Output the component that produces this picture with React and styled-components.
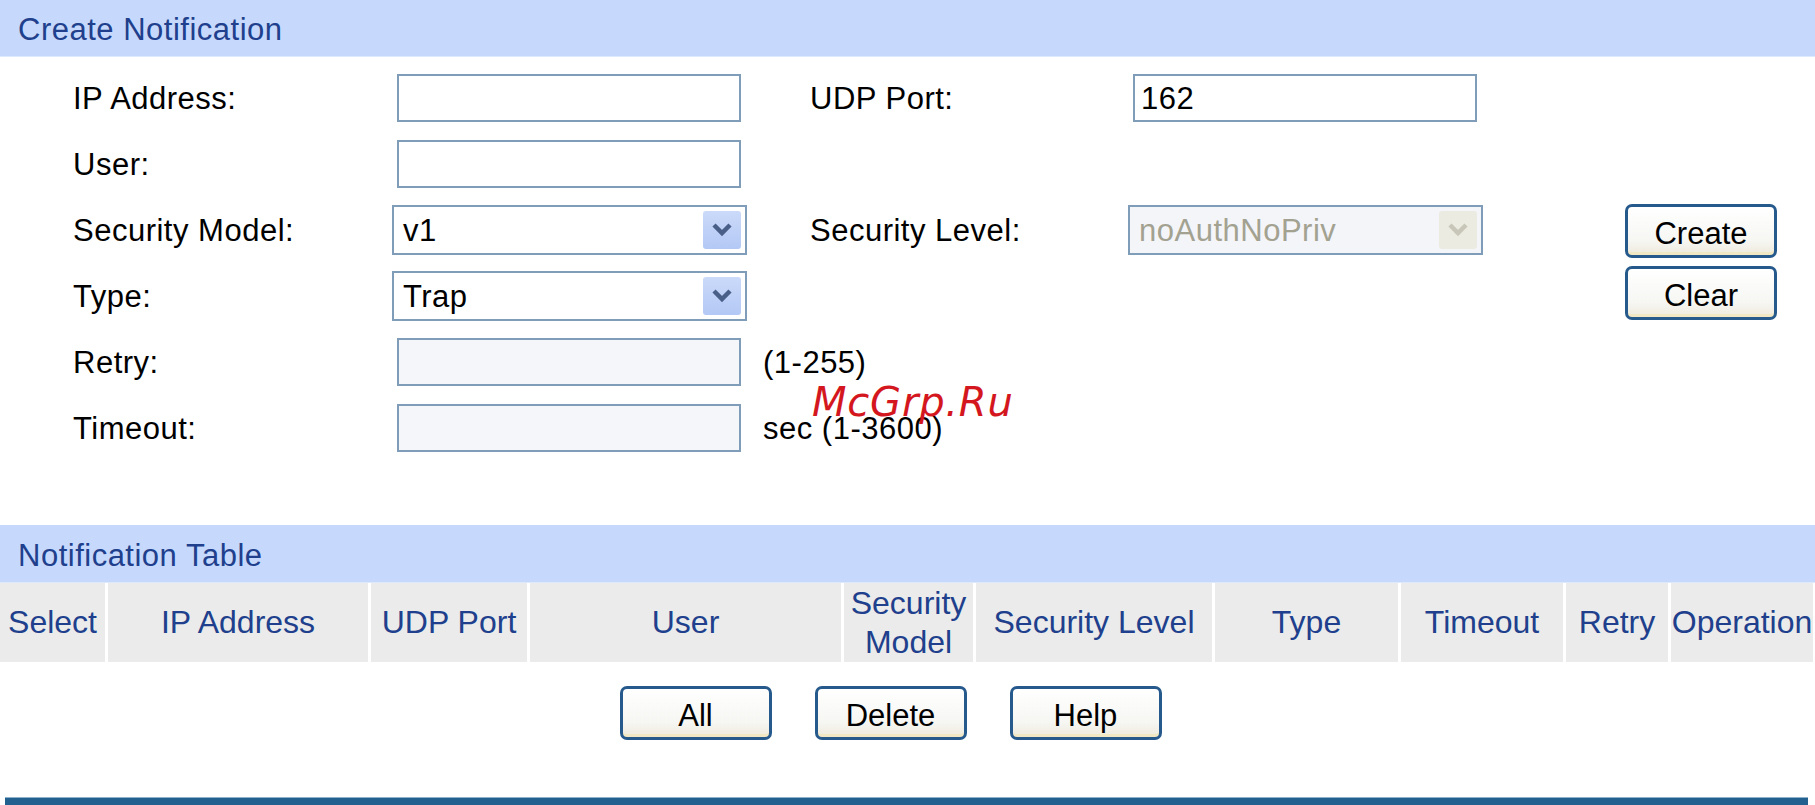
import React from 'react';
import styled, { createGlobalStyle } from 'styled-components';

const GlobalStyle = createGlobalStyle`
  html, body {
    margin: 0;
    padding: 0;
    background: #ffffff;
  }
  body {
    font-family: "Liberation Sans", Arial, sans-serif;
    width: 1815px;
    overflow: hidden;
  }
`

const Page = styled.div`
  position: relative;
  width: 1815px;
  height: 805px;
  display: flex;
  flex-direction: column;
`

const SectionTitle = styled.div`
  height: ${p => p.$height}px;
  display: flex;
  align-items: center;
  padding: 4px 0 0 18px;
  background: #c6d9fc;
  border-bottom: 1px solid #dfe9fd;
  box-sizing: border-box;
  color: #203f8c;
  font-size: 31px;
  letter-spacing: 0.5px;
`

const FormGrid = styled.div`
  display: grid;
  grid-template-columns: 319px 355px 63px 318px 354px 143px 152px;
  grid-auto-rows: 50px;
  row-gap: 16px;
  padding: 16px 0 72px 73px;
`

const Label = styled.div`
  grid-column: ${p => p.$col};
  display: flex;
  align-items: center;
  padding-top: 2px;
  font-size: 31px;
  letter-spacing: 0.5px;
  color: #000;
`

const TextInput = styled.input`
  grid-column: ${p => p.$col};
  align-self: center;
  justify-self: start;
  margin-left: 5px;
  width: 344px;
  height: 48px;
  box-sizing: border-box;
  border: 2px solid #7f9db9;
  outline: none;
  padding: 2px 6px 0;
  background: ${p => (p.disabled ? '#f4f6fa' : '#ffffff')};
  font-family: "Liberation Sans", Arial, sans-serif;
  font-size: 31px;
  letter-spacing: 0.5px;
  color: #000;
`

const SelectBox = styled.div`
  grid-column: ${p => p.$col};
  display: flex;
  align-items: center;
  width: 355px;
  height: 50px;
  box-sizing: border-box;
  border: 2px solid #7f9db9;
  padding: 2px 4px 0 9px;
  background: ${p => (p.$disabled ? '#f4f5f9' : '#ffffff')};
  color: ${p => (p.$disabled ? '#a3a291' : '#000')};
  font-size: 31px;
  letter-spacing: 0.5px;
`

const ArrowBox = styled.div`
  margin: -2px 0 0 auto;
  width: 38px;
  height: 38px;
  border-radius: 3px;
  display: flex;
  align-items: center;
  justify-content: center;
  background: ${p => (p.$disabled
    ? '#ecebe2'
    : 'linear-gradient(#cbdaf9, #b3c8f5)')};
`

const Hint = styled.div`
  grid-column: 3 / span 2;
  display: flex;
  align-items: center;
  padding: 2px 0 0 16px;
  font-size: 31px;
  letter-spacing: 0.5px;
  color: #000;
`

const ActionStack = styled.div`
  grid-column: 7;
  grid-row: 3 / span 2;
  display: flex;
  flex-direction: column;
  gap: 8px;
  margin-top: -1px;
`

const Button = styled.button`
  width: 152px;
  height: 54px;
  box-sizing: border-box;
  border: 3px solid #275a8c;
  border-radius: 7px;
  background: linear-gradient(#ffffff 0%, #f6f6f3 70%, #eeeadb 100%);
  box-shadow: inset 0 -6px 0 -3px #f3e8c4;
  font-family: "Liberation Sans", Arial, sans-serif;
  font-size: 31px;
  color: #000;
  padding: 5px 0 0;
`

const HeadRow = styled.div`
  display: grid;
  grid-template-columns: 105px 263px 159px 314px 132px 239px 186px 165px 105px 145px 2px;
  height: 79px;
  background: #ffffff;
`

const HeadCell = styled.div`
  display: flex;
  align-items: center;
  justify-content: center;
  text-align: center;
  background: #ebebeb;
  border-left: ${p => (p.$first ? 'none' : '3px solid #ffffff')};
  color: #203f8c;
  font-size: 32px;
  line-height: 39px;
  white-space: ${p => (p.$wrap ? 'normal' : 'nowrap')};
`

const ButtonBar = styled.div`
  display: flex;
  justify-content: center;
  gap: 43px;
  padding: 24px 34px 0 0;
`

const BottomBar = styled.div`
  margin: auto 7px 0 5px;
  height: 7px;
  background: #22618f;
  border-top: 1px solid #8fb1cc;
`

const Watermark = styled.div`
  position: absolute;
  left: 812px;
  top: 379px;
  font-family: "DejaVu Sans", sans-serif;
  font-style: italic;
  font-size: 40px;
  letter-spacing: 0.8px;
  color: #d4171e;
  pointer-events: none;
`

const Chevron = ({ color }) => (
  <svg width="22" height="16" viewBox="0 0 22 16">
    <path d="M3 3 L11 11 L19 3" fill="none" stroke={color} strokeWidth="4.5" />
  </svg>
)

const Select = ({ col, value, disabled }) => (
  <SelectBox $col={col} $disabled={disabled}>
    {value}
    <ArrowBox $disabled={disabled}>
      <Chevron color={disabled ? '#c8c6b8' : '#4a5f88'} />
    </ArrowBox>
  </SelectBox>
)

const columns = ['Select', 'IP Address', 'UDP Port', 'User', 'Security Model',
  'Security Level', 'Type', 'Timeout', 'Retry', 'Operation']

const App = () => {
  return (
    <Page>
      <GlobalStyle />
      <SectionTitle $height={57}>Create Notification</SectionTitle>
      <FormGrid>
        <Label $col={1}>IP Address:</Label>
        <TextInput $col={2} defaultValue="" />
        <Label $col={4}>UDP Port:</Label>
        <TextInput $col={5} defaultValue="162" />

        <Label $col={1}>User:</Label>
        <TextInput $col={2} defaultValue="" />
        <div style={{ gridColumn: '3 / span 5' }} />

        <Label $col={1}>Security Model:</Label>
        <Select col={2} value="v1" />
        <Label $col={4}>Security Level:</Label>
        <Select col={5} value="noAuthNoPriv" disabled />
        <ActionStack>
          <Button>Create</Button>
          <Button>Clear</Button>
        </ActionStack>

        <Label $col={1}>Type:</Label>
        <Select col={2} value="Trap" />

        <Label $col={1}>Retry:</Label>
        <TextInput $col={2} disabled defaultValue="" />
        <Hint>(1-255)</Hint>

        <Label $col={1}>Timeout:</Label>
        <TextInput $col={2} disabled defaultValue="" />
        <Hint>sec (1-3600)</Hint>
      </FormGrid>

      <SectionTitle $height={58}>Notification Table</SectionTitle>
      <HeadRow>
        {columns.map((c, i) => (
          <HeadCell key={c} $first={i === 0} $wrap={c === 'Security Model'}>{c}</HeadCell>
        ))}
        <HeadCell />
      </HeadRow>
      <ButtonBar>
        <Button>All</Button>
        <Button>Delete</Button>
        <Button>Help</Button>
      </ButtonBar>
      <BottomBar />
      <Watermark>McGrp.Ru</Watermark>
    </Page>
  );
}

export default App;
